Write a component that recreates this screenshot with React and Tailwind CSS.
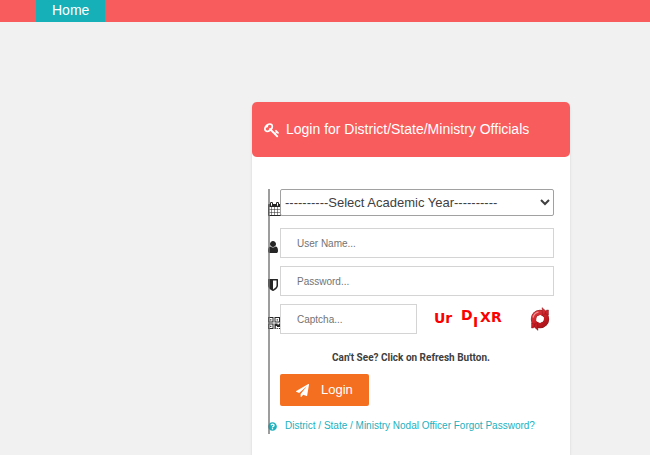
import { FaQuestionCircle } from "react-icons/fa";

const icons = {
  key: {
    box: "0 0 1792 1792",
    d: "M832 512q0-80-56-136t-136-56-136 56-56 136q0 42 19 83-41-19-83-19-80 0-136 56t-56 136 56 136 136 56 136-56 56-136q0-42-19-83 41 19 83 19 80 0 136-56t56-136zm851 704q0 17-49 66t-66 49q-9 0-28.5-16t-36.5-33-38.5-40-24.5-26l-96 96 220 220q28 28 28 68 0 42-39 81t-81 39q-40 0-68-28l-671-671q-176 131-365 131-163 0-265.5-102.5t-102.5-265.5q0-160 95-313t248-248 313-95q163 0 265.5 102.5t102.5 265.5q0 189-131 365l355 355 96-96q-3-3-26-24.5t-40-38.5-33-36.5-16-28.5q0-17 49-66t66-49q13 0 23 10 6 6 46 44.5t82 79.5 86.5 86 73 78 28.5 41z",
  },
  calendar: {
    box: "64 0 1664 1792",
    d: "M192 1664h288v-288h-288v288zm352 0h320v-288h-320v288zm-352-352h288v-320h-288v320zm352 0h320v-320h-320v320zm-352-384h288v-288h-288v288zm736 736h320v-288h-320v288zm-384-736h320v-288h-320v288zm768 736h288v-288h-288v288zm-384-352h320v-320h-320v320zm-352-864v-288q0-13-9.5-22.5t-22.5-9.5h-64q-13 0-22.5 9.5t-9.5 22.5v288q0 13 9.5 22.5t22.5 9.5h64q13 0 22.5-9.5t9.5-22.5zm736 864h288v-320h-288v320zm-384-384h320v-288h-320v288zm384 0h288v-288h-288v288zm32-480v-288q0-13-9.5-22.5t-22.5-9.5h-64q-13 0-22.5 9.5t-9.5 22.5v288q0 13 9.5 22.5t22.5 9.5h64q13 0 22.5-9.5t9.5-22.5zm384-64v1280q0 52-38 90t-90 38h-1408q-52 0-90-38t-38-90v-1280q0-52 38-90t90-38h128v-96q0-66 47-113t113-47h64q66 0 113 47t47 113v96h384v-96q0-66 47-113t113-47h64q66 0 113 47t47 113v96h128q52 0 90 38t38 90z",
  },
  user: {
    box: "256 0 1280 1792",
    d: "M1536 1399q0 109-62.5 187t-150.5 78h-854q-88 0-150.5-78t-62.5-187q0-85 8.5-160.5t31.5-152 58.5-131 94-89 134.5-34.5q131 128 313 128t313-128q76 0 134.5 34.5t94 89 58.5 131 31.5 152 8.5 160.5zm-256-887q0 159-112.5 271.5t-271.5 112.5-271.5-112.5-112.5-271.5 112.5-271.5 271.5-112.5 271.5 112.5 112.5 271.5z",
  },
  shield: {
    box: "256 0 1280 1792",
    d: "M1344 960v-640h-448v1137q119-63 213-137 235-184 235-360zm192-768v768q0 86-33.5 170.5t-83 150-118 127.5-126.5 103-121 77.5-89.5 49.5-42.5 20q-12 6-26 6t-26-6q-16-7-42.5-20t-89.5-49.5-121-77.5-126.5-103-118-127.5-83-150-33.5-170.5v-768q0-26 19-45t45-19h1152q26 0 45 19t19 45z",
  },
  qrcode: {
    box: "128 0 1536 1792",
    d: "M128 128h704v704h-704zM256 256v448h448v-448zM400 400h160v160h-160zM960 128h704v704h-704zM1088 256v448h448v-448zM1232 400h160v160h-160zM128 960h704v704h-704zM256 1088v448h448v-448zM400 1232h160v160h-160zM960 960h384v128h192v-128h128v448h-384v-128h-160v384h-160zM1232 1536h144v128h-144zM1520 1536h144v128h-144z",
  },
  plane: {
    box: "0 0 1792 1792",
    d: "M1764 11q33 24 27 64l-256 1536q-5 29-32 45-14 8-31 8-11 0-24-5l-453-185-242 295q-18 23-49 23-13 0-22-4-19-7-30.5-23.5t-11.5-36.5v-349l864-1059-1069 925-395-162q-37-14-40-55-2-40 32-59l1664-960q15-9 32-9 20 0 36 11z",
  },
};

function Icon({ name, className }) {
  return (
    <svg viewBox={icons[name].box} fill="currentColor" fillRule="evenodd" aria-hidden="true" className={className}>
      <path d={icons[name].d} />
    </svg>
  );
}

function Field({ icon, id, label, children }) {
  return (
    <div className="flex items-end">
      <label htmlFor={id} aria-label={label} className="flex w-3 shrink-0 pb-1 text-neutral-800">
        <Icon name={icon} className="h-[14px] w-auto shrink-0" />
      </label>
      {children}
    </div>
  );
}

function CaptchaImage() {
  return (
    <svg viewBox="0 0 80 30" className="h-[30px] w-20 font-['DejaVu_Sans',Verdana,sans-serif] text-[14px] font-bold" fill="#fb0000">
      <text x="5" y="19">Ur</text>
      <text x="32" y="16">D</text>
      <text x="44" y="23">I</text>
      <text x="51" y="18">X</text>
      <text x="62" y="18">R</text>
    </svg>
  );
}

function RefreshIcon() {
  return (
    <svg viewBox="0 0 24 24" className="h-6 w-6" aria-hidden="true">
      <defs>
        <linearGradient id="gloss" gradientUnits="userSpaceOnUse" x1="4" y1="2" x2="20" y2="22">
          <stop offset="0" stopColor="#dd4a4e" />
          <stop offset="0.5" stopColor="#cf1f26" />
          <stop offset="1" stopColor="#960e14" />
        </linearGradient>
      </defs>
      <circle cx="12" cy="12" r="6.4" fill="none" stroke="#8d1a1e" strokeWidth="5.6" />
      <circle cx="12" cy="12" r="6.4" fill="none" stroke="url(#gloss)" strokeWidth="4.8" />
      <g fill="url(#gloss)" stroke="#7d1216" strokeWidth="0.4" strokeLinejoin="round">
        <path d="M14 0.6 L19.5 5.5 L14.5 8.5 Z" />
        <path d="M10 23.4 L4.5 18.5 L9.5 15.5 Z" />
        <path d="M18.5 3 L20.5 3 L20.5 8 L17 6.500 Z" />
        <path d="M5.5 21 L3.5 21 L3.5 16 L7 17.500 Z" />
      </g>
      <path d="M9 9.5 L12.5 8 L16 10.5 L15.5 13.5 L12 16 L8.2 14 Z" fill="#fff" />
      <path d="M5 10.5 A7.300 7.300 0 0 1 10.500 5" fill="none" stroke="#f09a9a" strokeWidth="1.2" />
    </svg>
  );
}

const inputStyle =
  "h-[30px] min-w-0 border border-neutral-300 bg-white px-4 text-[10px] text-neutral-700 outline-none placeholder:text-neutral-500";

export default function App() {
  return (
    <div className="flex min-h-screen flex-col bg-[#f1f1f1] font-['Liberation_Sans',Arial,sans-serif]">
      <nav className="flex h-[22px] bg-[#f95c5c] pl-9">
        <a href="#" className="bg-[#16b0b8] px-4 text-[14px] leading-5 text-white">
          Home
        </a>
      </nav>

      <main className="flex flex-1 justify-end pt-20 pr-20">
        <section className="w-full max-w-[318px] rounded-t-md bg-white shadow-sm">
          <h1 className="flex h-[55px] items-center gap-1.5 rounded-[5px] bg-[#f95c5c] px-3 text-[14px] text-white">
            <Icon name="key" className="h-4 w-4" />
            Login for District/State/Ministry Officials
          </h1>

          <form className="relative mx-4 mt-8 mb-5 flex flex-col gap-2" onSubmit={(e) => e.preventDefault()}>
            <Field icon="calendar" id="year" label="Academic Year">
              <select id="year" className="mb-1 h-[27px] min-w-0 flex-1 rounded-xs border border-neutral-400 bg-white text-[13px] text-neutral-700">
                <option>----------Select Academic Year----------</option>
              </select>
            </Field>
            <Field icon="user" id="username" label="User Name">
              <input id="username" type="text" placeholder="User Name..." className={`${inputStyle} flex-1`} />
            </Field>
            <Field icon="shield" id="password" label="Password">
              <input id="password" type="password" placeholder="Password..." className={`${inputStyle} flex-1`} />
            </Field>
            <Field icon="qrcode" id="captcha" label="Captcha">
              <div className="flex flex-1 items-center">
                <input id="captcha" type="text" placeholder="Captcha..." className={`${inputStyle} w-1/2`} />
                <div className="flex flex-1 items-center justify-between pr-0.5 pl-3">
                  <CaptchaImage />
                  <button type="button" aria-label="Refresh">
                    <RefreshIcon />
                  </button>
                </div>
              </div>
            </Field>

            <p className="mt-2 text-center font-[Roboto,sans-serif] text-[10px] leading-4 font-bold text-neutral-700">
              Can't See? Click on Refresh Button.
            </p>
            <button type="submit" className="ml-3 flex h-8 items-center gap-3 self-start rounded-xs bg-[#f56f21] px-4 text-[13px] text-white">
              <Icon name="plane" className="h-[13px] w-[13px]" />
              Login
            </button>
            <a href="#" className="mt-1 flex items-center gap-2 text-[10px] leading-4 text-[#1bb1bd]">
              <FaQuestionCircle className="h-[9px] w-[9px] shrink-0" />
              District / State / Ministry Nodal Officer Forgot Password?
            </a>
            <span className="absolute inset-y-0 left-0 w-0.5 bg-neutral-500/70" />
          </form>
        </section>
      </main>
    </div>
  );
}
